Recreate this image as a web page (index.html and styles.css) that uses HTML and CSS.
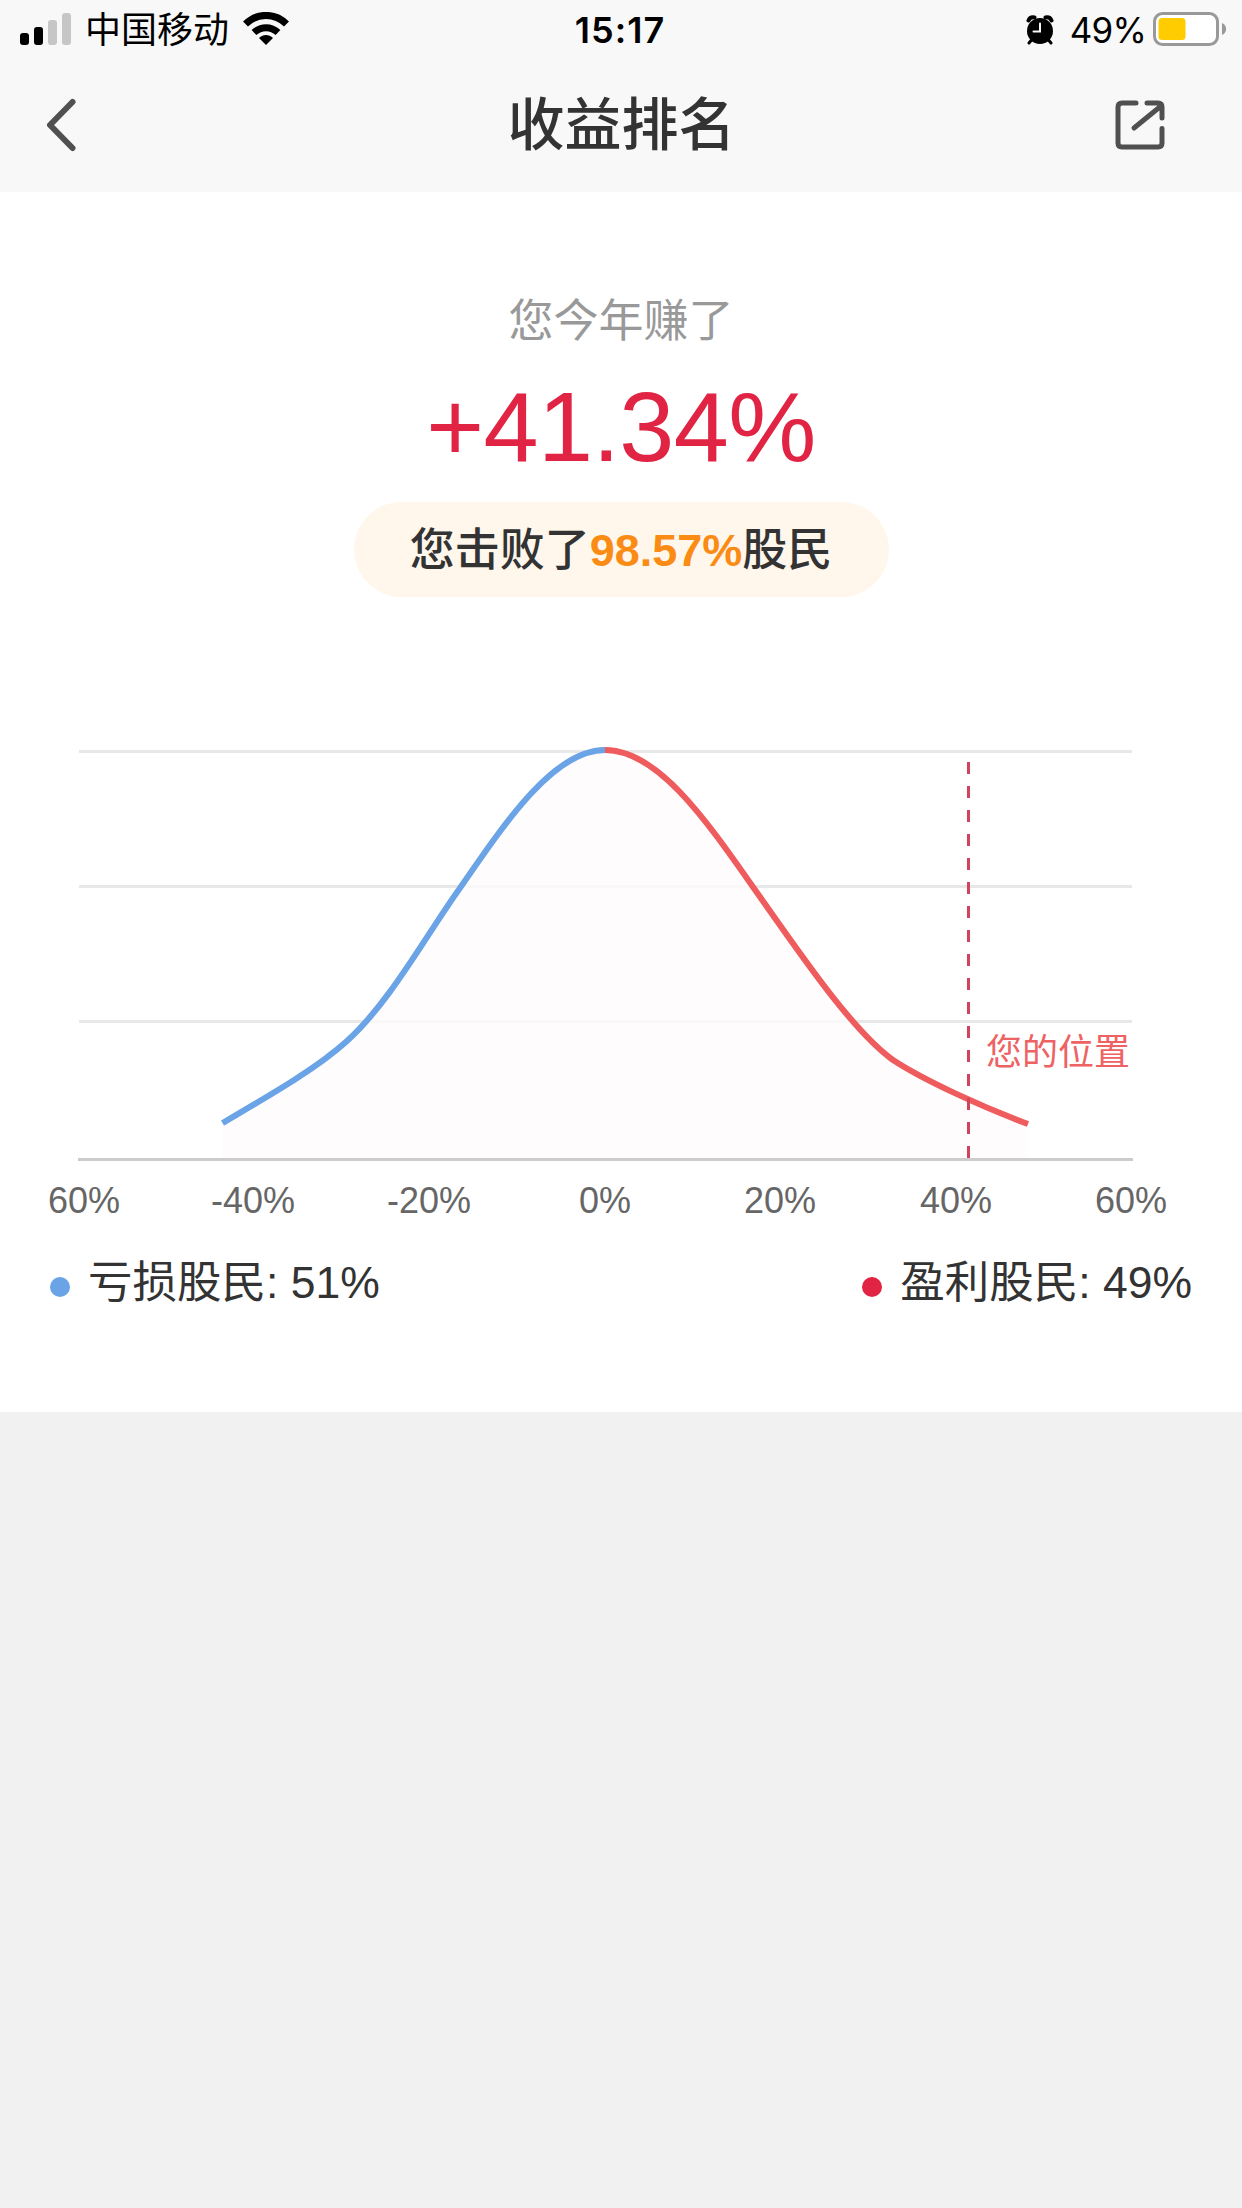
FILE: index.html
```html
<!DOCTYPE html>
<html lang="zh-CN">
<head>
  <meta charset="UTF-8">
  <meta name="viewport" content="width=device-width, initial-scale=1.0">
  <title>收益排名</title>
  <link rel="stylesheet" href="styles.css">
</head>
<body>
  <header class="header">
    <div class="status">
      <div class="status-left">
        <svg class="signal" width="52" height="34" viewBox="0 0 52 34">
          <rect x="0" y="21" width="9" height="12" rx="3"/>
          <rect x="14" y="15" width="9" height="18" rx="3"/>
          <rect class="off" x="28" y="8" width="9" height="25" rx="3"/>
          <rect class="off" x="42" y="1" width="9" height="32" rx="3"/>
        </svg>
        <span class="carrier">中国移动</span>
        <svg class="wifi" width="46" height="34" viewBox="0 0 46 34">
          <path class="arc" d="M2.5 12C14 .5 32 .5 43.500 12"/>
          <path class="arc" d="M11 20.500C18 14 28 14 35 20.500"/>
          <path d="M16 26C20 22 26 22 30 26L23 33z"/>
        </svg>
      </div>
      <span class="time">15:17</span>
      <div class="status-right">
        <svg class="alarm" width="28" height="30" viewBox="0 0 28 30">
          <circle cx="14" cy="16" r="13"/>
          <path class="bell" d="M2.5 5.5C3.5 3 6 2 8.5 2.5M25.5 5.5C24.5 3 22 2 19.5 2.5"/>
          <path class="leg" d="M5.5 25L3 28M22.5 25L25 28"/>
          <path class="hand" d="M14 8.5V16.500H7.5"/>
        </svg>
        <span class="percent">49%</span>
        <svg class="battery" width="74" height="34" viewBox="0 0 74 34">
          <rect class="shell" x="1.5" y="1.5" width="63" height="31" rx="8"/>
          <rect class="level" x="5.5" y="6" width="27" height="22" rx="3.5"/>
          <path class="nub" d="M69 11C74.5 13 74.5 21 69 23z"/>
        </svg>
      </div>
    </div>
    <div class="nav">
      <svg class="icon" width="56" height="56" viewBox="0 0 56 56">
        <path d="M39.5 6L17 29L39.5 52"/>
      </svg>
      <h1 class="title">收益排名</h1>
      <svg class="icon share" width="56" height="56" viewBox="0 0 56 56">
        <path d="M26 7H12Q8 7 8 11V47Q8 51 12 51H48Q52 51 52 47V32.5M37 7H48Q52 7 52 11V22M24 32L51 10"/>
      </svg>
    </div>
  </header>

  <main class="card">
    <p class="label">您今年赚了</p>
    <p class="profit">+41.34%</p>
    <p class="beat">您击败了<span>98.57%</span>股民</p>

    <svg class="chart" width="1242" height="500" viewBox="0 730 1242 500">
      <g class="grid">
        <path d="M79 751.5H1132M79 886.5H1132M79 1021.5H1132"/>
      </g>
      <path class="area" d="M222.5 1123C265 1098 315 1070 347 1041C390 1002 425 937 460 888C508 818 555 750 605 750C657 750 704 817 753 887C795 946 850 1029 893 1060C925 1081 985 1108 1028 1124V1158H222.5z"/>
      <path class="axis" d="M78 1159.5H1133"/>
      <path class="curve loss" d="M222.5 1123C265 1098 315 1070 347 1041C390 1002 425 937 460 888C508 818 555 750 605 750"/>
      <path class="curve gain" d="M605 750C657 750 704 817 753 887C795 946 850 1029 893 1060C925 1081 985 1108 1028 1124"/>
      <path class="marker" d="M968.5 762V1158"/>
      <text class="marker-text" x="986" y="1065">您的位置</text>
      <g class="ticks">
        <text x="84" y="1213">60%</text>
        <text x="253" y="1213">-40%</text>
        <text x="429" y="1213">-20%</text>
        <text x="605" y="1213">0%</text>
        <text x="780" y="1213">20%</text>
        <text x="956" y="1213">40%</text>
        <text x="1131" y="1213">60%</text>
      </g>
    </svg>

    <div class="legend">
      <div class="legend-item"><i class="dot blue"></i>亏损股民: 51%</div>
      <div class="legend-item"><i class="dot red"></i>盈利股民: 49%</div>
    </div>
  </main>
</body>
</html>
```

FILE: styles.css
```css
* {
  box-sizing: border-box;
}

body {
  margin: 0;
  min-height: 2208px;
  background-color: #f1f1f1;
  font-family: "Liberation Sans", "Noto Sans CJK SC", sans-serif;
  color: #333;
}

p,
h1 {
  margin: 0;
}

/* 顶部 */
.header {
  height: 192px;
  background-color: #f8f8f8;
}

.status {
  display: grid;
  grid-template-columns: 1fr auto 1fr;
  align-items: center;
  height: 60px;
  padding: 0 15px 0 20px;
  color: #000;
}

.status-left,
.status-right {
  display: flex;
  align-items: center;
  height: 60px;
}

.status-right {
  justify-content: flex-end;
}

.status-left svg {
  margin-bottom: 2px;
}

.signal .off {
  fill: #c6c6c6;
}

.carrier {
  margin: 2px 14px 0 13px;
  font-size: 36px;
  line-height: 50px;
}

.wifi .arc {
  fill: none;
  stroke: #000;
  stroke-width: 7;
}

.time {
  padding-right: 7px;
  font-family: Inter, sans-serif;
  font-size: 36px;
  font-weight: 600;
  line-height: 60px;
  letter-spacing: 1px;
}

.percent {
  margin: 0 7px 0 16px;
  font-family: Inter, sans-serif;
  font-size: 35px;
  letter-spacing: -0.8px;
}

.alarm {
  margin-bottom: 1px;
}

.battery {
  margin-bottom: 2px;
}

.alarm path {
  fill: none;
  stroke: #000;
  stroke-linecap: round;
}

.alarm .bell {
  stroke-width: 4;
}

.alarm .leg {
  stroke-width: 3;
}

.alarm .hand {
  stroke: #f8f8f8;
  stroke-width: 2;
}

.battery .shell {
  fill: #fff;
  stroke: #999;
  stroke-width: 3;
}

.battery .level {
  fill: #ffcc00;
}

.battery .nub {
  fill: #999;
}

.nav {
  display: flex;
  align-items: center;
  justify-content: space-between;
  height: 132px;
  padding: 0 76px 4px 33px;
}

.nav .icon {
  fill: none;
  stroke: #505050;
  stroke-width: 6;
  stroke-linecap: round;
  stroke-linejoin: round;
}

.nav .share {
  stroke-width: 5;
}

.title {
  padding: 2px 0 0 44px;
  font-size: 57px;
  font-weight: 500;
  line-height: 80px;
}

/* 收益 */
.card {
  display: flex;
  flex-direction: column;
  align-items: center;
  height: 1220px;
  padding-top: 98px;
  background-color: #fff;
}

.label {
  font-size: 45px;
  line-height: 64px;
  color: #999;
}

.profit {
  margin-top: 13px;
  font-size: 99px;
  line-height: 120px;
  letter-spacing: -0.6px;
  color: #e12444;
}

.beat {
  width: 535px;
  height: 95px;
  margin-top: 15px;
  border-radius: 48px;
  background-color: #fff7ec;
  font-size: 45px;
  font-weight: 500;
  line-height: 97px;
  text-align: center;
}

.beat span {
  font-weight: bold;
  color: #fa8c16;
}

/* 分布图 */
.chart {
  flex: none;
  margin-top: 133px;
}

.grid path {
  stroke: #e8e8e8;
  stroke-width: 3;
}

.axis {
  stroke: #ccc;
  stroke-width: 3;
}

.area {
  fill: #fefbfc;
  fill-opacity: 0.8;
}

.curve {
  fill: none;
  stroke-width: 6;
}

.loss {
  stroke: #6aa3e6;
}

.gain {
  stroke: #ee5c5e;
}

.marker {
  stroke: #cf4560;
  stroke-width: 3;
  stroke-dasharray: 12 12;
}

.marker-text {
  font-size: 36px;
  fill: #ee6263;
}

.ticks text {
  font-size: 36px;
  text-anchor: middle;
  fill: #666;
}

.legend {
  display: flex;
  justify-content: space-between;
  width: 100%;
  margin-top: 21px;
  padding: 0 50px 0 50px;
}

.legend-item {
  display: flex;
  align-items: center;
  font-size: 44.5px;
  line-height: 64px;
}

.dot {
  width: 20px;
  height: 20px;
  margin: 8px 18px 0 0;
  border-radius: 50%;
}

.blue {
  background-color: #6aa3e6;
}

.red {
  background-color: #e12444;
}
```
